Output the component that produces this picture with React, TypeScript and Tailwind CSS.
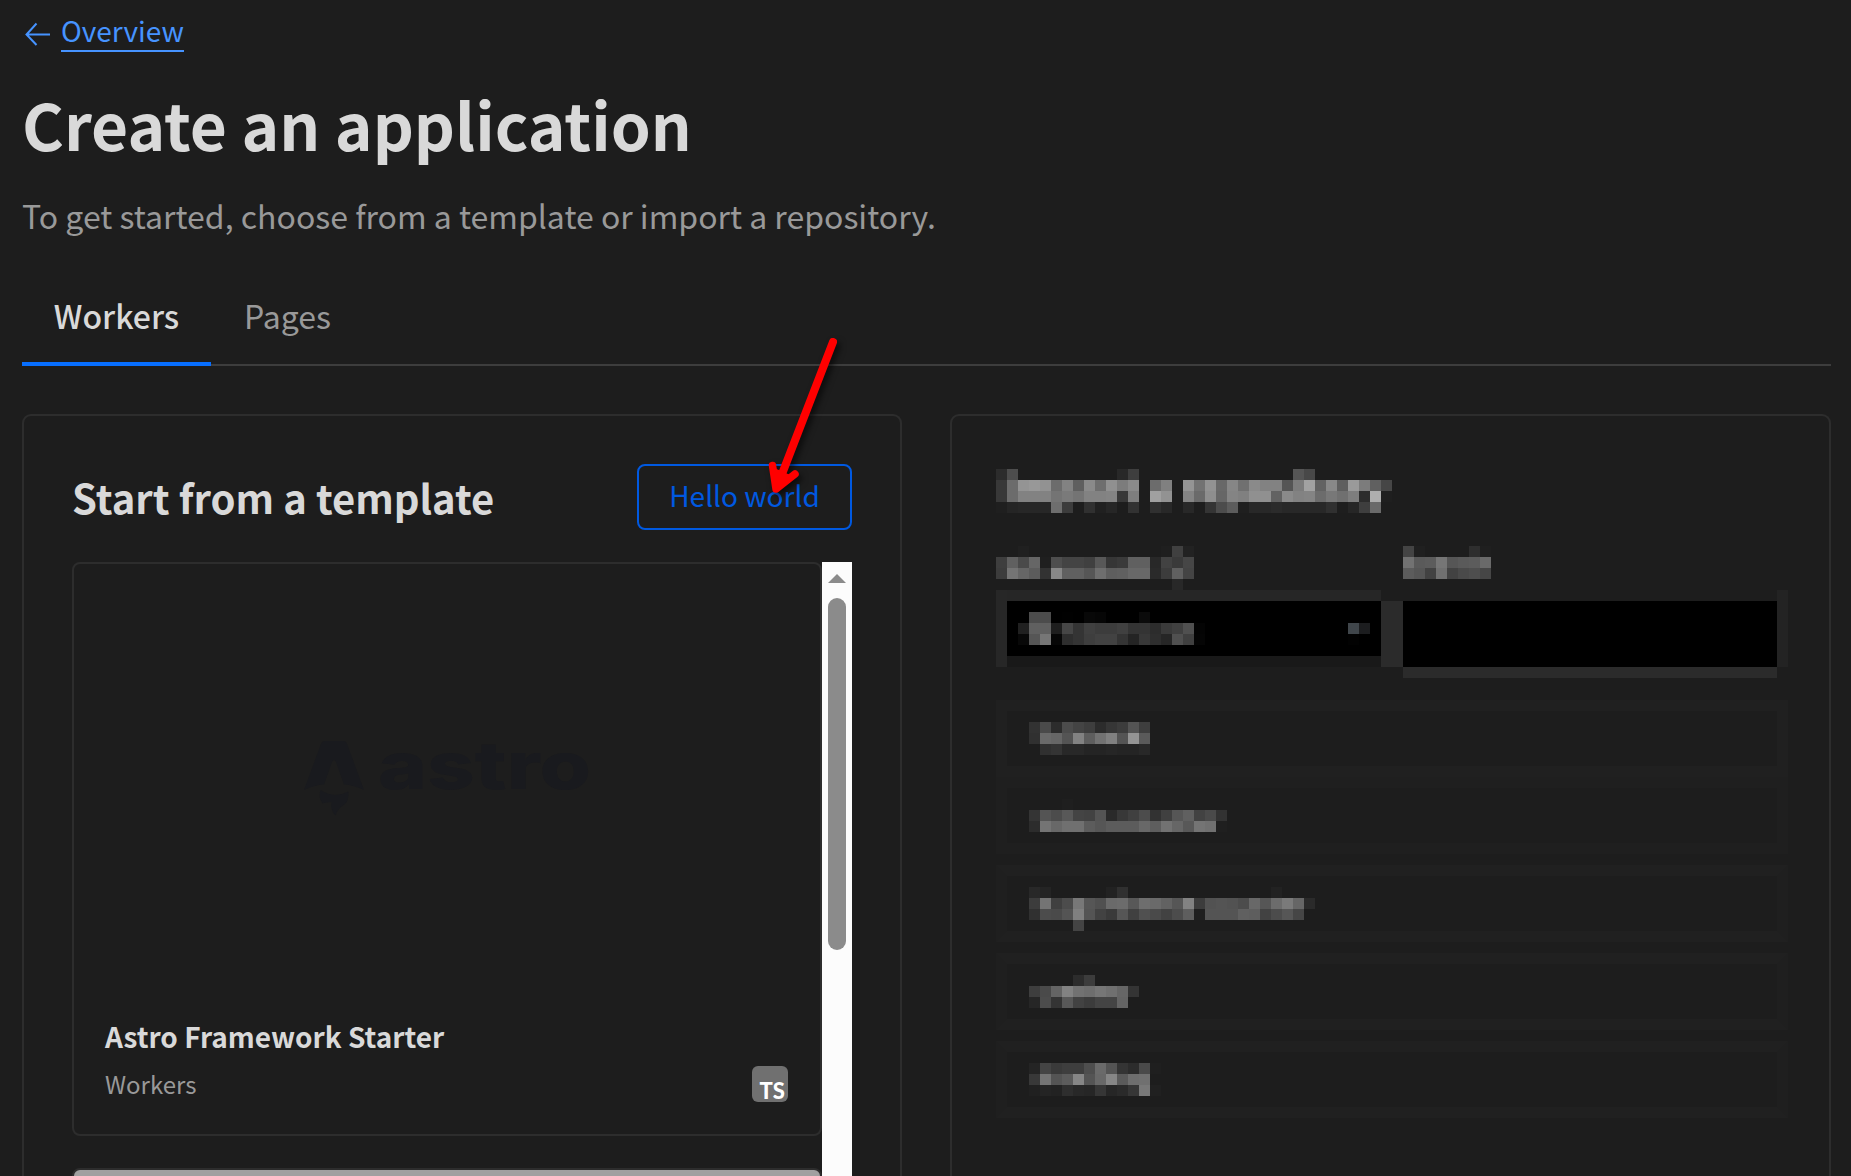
import React from "react";

const CELL = 11;

type Run = [row: number, col: number, levels: string];

/* Redacted text: every cell is an 11px square, its grey level given as two hex digits ("--" leaves it empty). */
function Mosaic({ cols, rows, runs, label }: { cols: number; rows: number; runs: Run[]; label: string }) {
  return (
    <svg
      className="block shrink-0"
      width={cols * CELL}
      height={rows * CELL}
      shapeRendering="crispEdges"
      role="img"
      aria-label={label}
    >
      {runs.flatMap(([row, col, levels]) =>
        levels.split(" ").map((v, i) =>
          v === "--" ? null : (
            <rect
              key={`${row}-${col + i}`}
              x={(col + i) * CELL}
              y={row * CELL}
              width={CELL}
              height={CELL}
              fill={v.length === 6 ? `#${v}` : `#${v}${v}${v}`}
            />
          )
        )
      )}
    </svg>
  );
}

const HEADING: Run[] = [
  [0, 0, "2c 4d"],
  [0, 11, "28 3e"],
  [0, 27, "55 48"],
  [1, 0, "38 6c 94 98 92 6c 82 5f 8a 6e 90 7c 8a -- 6c 80 -- 94 72 92 68 86 70 8a 82 82 55 7c a2 62 88 5e 9a 7c 60 46"],
  [2, 0, "38 6c 82 82 82 74 7a 74 82 82 84 38 7e -- a0 92 -- 84 6a 8e 66 84 80 90 90 62 8a 82 84 6c 78 70 7e 2c ae 1f"],
  [3, 0, "1f 25 27 27 27 6e 3c -- 30 20 26 -- 32 -- 30 28 -- 28 -- 34 4c 5c 1f 28 28 2b 28 28 28 28 30 1e 26 3e 6a"],
];

const ACCOUNT: Run[] = [
  [0, 2, "20"],
  [0, 15, "1f 40 22"],
  [1, 0, "3e 60 4a 66 1f 4e 44 44 40 58 36 3a 60 60 28 42 3a 46"],
  [2, 0, "3c 74 66 5c 32 88 60 60 56 6e 5e 60 68 68 2a 3c 60 44"],
  [3, 16, "28"],
];

const BRANCH: Run[] = [
  [0, 0, "44 20 -- -- -- -- 2e 1f"],
  [1, 0, "72 5a 5c 76 56 5a 5c 6a"],
  [2, 0, "5c 56 42 70 42 4a 4e 46"],
];

const SELECT: Run[] = [
  [1, 2, "4c 4c -- 01 -- 08 06 -- -- -- 0b"],
  [2, 1, "20 60 60 1e 46 34 40 3c 3c 40 34 34 2c 3a 40 50 04"],
  [2, 31, "40464b 1c1d1f"],
  [3, 1, "08 56 76 06 2e 34 3e 42 42 34 24 38 2e 26 50 40 05"],
  [3, 31, "02"],
];

const REPOS: { box: string; runs: Run[] }[] = [
  {
    box: "border-[#202020]",
    runs: [
      [1, 2, "32 4a 2c 4c 44 3e 2c 36 3c 54 3e"],
      [2, 2, "30 6a 66 54 82 5e 72 80 54 94 5a"],
      [3, 3, "30 34 28 28 24 24 26 24 24 28"],
    ],
  },
  {
    box: "border-[#1f1f1f]",
    runs: [
      [1, 5, "1f"],
      [2, 2, "34 54 4c 58 44 42 54 2a 38 40 4c 32 40 56 60 42 4a 32"],
      [3, 2, "2c 74 68 70 70 5c 56 5c 5c 5c 68 5e 72 66 58 74 70 1f"],
    ],
  },
  {
    box: "mt-[11px] border-x-[#1f1f1f] border-y-[#202020]",
    runs: [
      [1, 2, "28 24 -- -- -- -- -- 22 30"],
      [1, 24, "22"],
      [2, 2, "3c 74 40 4c 78 56 50 6a 6c 58 6e 6a 62 56 82 3c 52 54 52 4c 68 56 6c 7a 66 2a"],
      [3, 2, "30 4c 4a 54 80 54 42 3a 56 40 50 4a 42 4c 5e 1f 54 54 54 60 5e 42 4c 56 46"],
      [4, 6, "44"],
    ],
  },
  {
    box: "mt-[11px] border-x-[#1f1f1f] border-y-[#202020]",
    runs: [
      [1, 6, "2c 3c"],
      [2, 2, "3e 4a 64 82 72 6e 76 70 66 34"],
      [3, 2, "26 4c 34 58 42 3c 44 44 64"],
    ],
  },
  {
    box: "mt-[11px] border-x-[#1f1f1f] border-y-[#202020]",
    runs: [
      [1, 2, "24 44 3a 3e 3e 4e 6a 54 34 2c 4a 1f"],
      [2, 2, "38 74 54 5c 86 54 68 86 5a 6e 70"],
      [3, 2, "20 24 22 2e 28 26 36 26 2a 36 78 20"],
    ],
  },
];

function AstroLogo() {
  return (
    <svg
      className="mt-[165px] ml-[226px] block overflow-visible"
      width="300"
      height="100"
      viewBox="300 729 300 100"
      fill="#191a1e"
    >
      <path d="M304 790L321 744Q322 741 325 741H343Q346 741 347 744L364 790Q354 785 344 784.500L336 762Q334 758 332 762L324 784.500Q314 785 304 790Z" />
      <path d="M320.500 790Q334 799 348.500 791.500Q349 800 345 804Q337 809 335.500 815.500Q330 810 331.500 802Q325 802.500 322.500 803.500Q318 797 320.500 790Z" />
      <text
        x="378"
        y="789"
        fontFamily="Inter, sans-serif"
        fontWeight="800"
        fontSize="66"
        textLength="213"
        lengthAdjust="spacingAndGlyphs"
      >
        astro
      </text>
    </svg>
  );
}

function TemplatePanel() {
  return (
    <section className="flex w-[880px] flex-col rounded-t-[9px] border-2 border-b-0 border-[#2d2d2d] px-12 pt-12">
      <div className="flex h-[66px] shrink-0 items-center justify-between">
        <h2 className="text-[40px] leading-[60px] font-bold whitespace-nowrap">Start from a template</h2>
        <button className="h-[66px] w-[215px] rounded-[8px] border-2 border-[#0059e1] pb-1 text-[28px] leading-[40px] whitespace-nowrap text-[#0059e1]">
          Hello world
        </button>
      </div>
      <div className="mt-8 flex min-h-0 flex-1">
        <div className="flex-1 overflow-hidden">
          <article className="flex h-[574px] flex-col rounded-[8px] border-2 border-[#2d2d2d]">
            <div className="h-[450px] shrink-0">
              <AstroLogo />
            </div>
            <div className="px-8">
              <h3 className="-ml-px text-[28px] leading-[44px] font-bold whitespace-nowrap">Astro Framework Starter</h3>
              <div className="mt-[6px] flex items-end justify-between">
                <p className="-ml-px text-[24px] leading-[40px] text-[#999]">Workers</p>
                <span className="mb-[2px] flex h-9 w-9 items-end justify-end rounded-[6px] bg-[#707070] pr-[3px] font-[Lato] text-[22px] leading-[23px] font-black text-white">
                  TS
                </span>
              </div>
            </div>
          </article>
          <article className="mt-8 h-[574px] rounded-[8px] border-2 border-[#2d2d2d] bg-[#a0a0a0]" />
        </div>
        <div className="flex w-[30px] flex-col items-center bg-[#fcfcfc] pt-3">
          <svg className="block" width="18" height="9">
            <path d="M9 0L18 9H0Z" fill="#8b8b8b" />
          </svg>
          <div className="mt-[15px] h-[352px] w-[18px] rounded-full bg-[#8b8b8b]" />
        </div>
      </div>
    </section>
  );
}

function ImportPanel() {
  return (
    <section className="flex flex-1 flex-col rounded-t-[9px] border-2 border-b-0 border-[#2d2d2d] pt-[53px] pl-11">
      <Mosaic cols={36} rows={4} runs={HEADING} label="Redacted heading" />
      <div className="mt-[33px] flex gap-[209px]">
        <Mosaic cols={18} rows={4} runs={ACCOUNT} label="Redacted label" />
        <Mosaic cols={8} rows={4} runs={BRANCH} label="Redacted label" />
      </div>
      <div className="flex h-[88px] items-start">
        <div className="flex h-[77px] w-[385px] flex-col justify-between border-l-[11px] border-[#272727] bg-[#262626]">
          <div className="mt-[11px] h-[55px] bg-black">
            <Mosaic cols={34} rows={5} runs={SELECT} label="Redacted selection" />
          </div>
          <div className="h-[11px] bg-[#191919]" />
        </div>
        <div className="mt-[11px] h-[66px] w-[22px] bg-[#2b2b2b]" />
        <div className="mt-[11px] h-[77px] w-[374px] border-b-[11px] border-[#2b2b2b] bg-black" />
        <div className="h-[77px] w-[11px] bg-[#232323]" />
      </div>
      <ul className="mt-[22px] w-[792px]">
        {REPOS.map((repo, i) => (
          <li key={i} className={`h-[77px] border-[11px] ${repo.box}`}>
            <Mosaic cols={30} rows={5} runs={repo.runs} label="Redacted repository" />
          </li>
        ))}
      </ul>
    </section>
  );
}

function PointerArrow() {
  return (
    <svg className="pointer-events-none absolute top-[330px] left-[760px]" width="90" height="175" viewBox="760 330 90 175">
      <g
        fill="none"
        stroke="#ff0000"
        strokeLinecap="round"
        strokeLinejoin="round"
        style={{ filter: "drop-shadow(3px 4px 3px rgba(0,0,0,.6))" }}
      >
        <path d="M833 342L777 487" strokeWidth="8" />
        <path d="M772.500 465.500L776 489L795 474" strokeWidth="7.500" />
        <path d="M774 470L776 489L790 477Z" strokeWidth="4" fill="#ff0000" />
      </g>
    </svg>
  );
}

export default function App() {
  return (
    <main className="relative flex h-[1176px] w-[1851px] flex-col overflow-hidden bg-[#1d1d1d] pr-5 pl-[22px] font-['Noto_Sans_CJK_SC',sans-serif] text-[#d9d9d9]">
      <a className="flex h-[52px] shrink-0 items-end text-[#4693ff]">
        <svg className="mr-[10px] mb-[6px] ml-[3px] block" width="26" height="24" fill="none" stroke="currentColor" strokeWidth="2">
          <path d="M25 12.500H1.500M11.500 1.500L1.500 12.500L11.500 23" />
        </svg>
        <span className="border-b-2 border-current pb-1 text-[28px] leading-[32px] whitespace-nowrap">Overview</span>
      </a>
      <h1 className="mt-[23px] text-[64px] leading-[96px] font-bold whitespace-nowrap">Create an application</h1>
      <p className="mt-5 text-[32px] leading-[48px] whitespace-nowrap text-[#999]">
        To get started, choose from a template or import a repository.
      </p>
      <nav className="mt-[41px] flex h-[86px] shrink-0 border-b-2 border-[#3d3d3d] text-[32px] leading-[48px]">
        <span className="-mb-[2px] w-[189px] border-b-4 border-[#086fff] pt-[11px] text-center font-medium">Workers</span>
        <span className="w-[153px] pt-[11px] text-center text-[#999]">Pages</span>
      </nav>
      <div className="mt-12 flex min-h-0 flex-1 gap-12">
        <TemplatePanel />
        <ImportPanel />
      </div>
      <PointerArrow />
    </main>
  );
}
